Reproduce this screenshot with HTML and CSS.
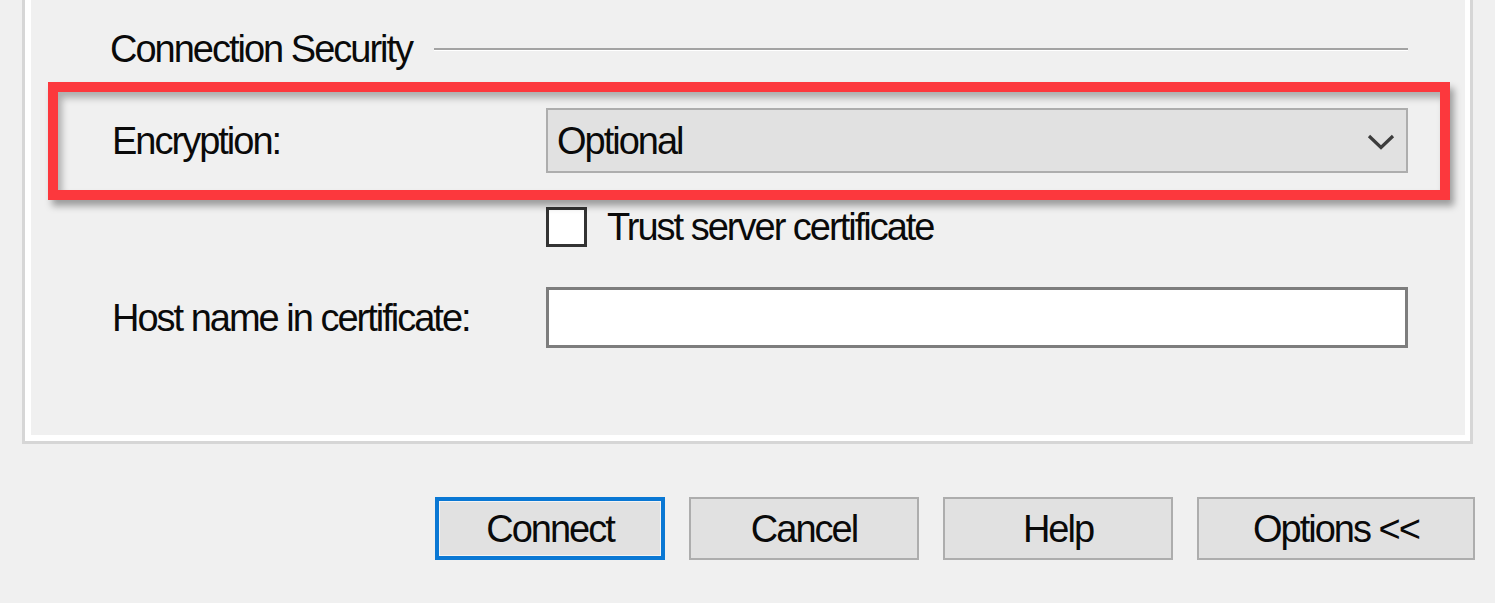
FILE: index.html
```html
<!DOCTYPE html>
<html>
<head>
<meta charset="utf-8">
<title>Connection Security</title>
<link rel="stylesheet" href="styles.css">
</head>
<body>
<div class="dialog">
  <div class="group">
    <div class="group-inner">
      <div class="section-head">
        <span class="section-title">Connection Security</span>
        <span class="section-rule"></span>
      </div>
      <div class="row row-enc">
        <span class="field-label">Encryption:</span>
        <div class="select">
          <span class="select-value">Optional</span>
          <svg class="chevron" width="28" height="18" viewBox="0 0 28 18"><path d="M2 3 L14 14.5 L26 3" fill="none" stroke="#3c3c3c" stroke-width="3.2"/></svg>
        </div>
      </div>
      <div class="row row-check">
        <span class="label-spacer"></span>
        <div class="check">
          <span class="checkbox"></span>
          <span class="check-label">Trust server certificate</span>
        </div>
      </div>
      <div class="row row-host">
        <span class="field-label">Host name in certificate:</span>
        <div class="textbox"></div>
      </div>
    </div>
  </div>
  <div class="buttons">
    <button class="btn btn-default">Connect</button>
    <button class="btn">Cancel</button>
    <button class="btn">Help</button>
    <button class="btn btn-wide">Options &lt;&lt;</button>
  </div>
  <div class="highlight"></div>
</div>
</body>
</html>
```
FILE: styles.css
```css
html, body {
  margin: 0;
  padding: 0;
}
body {
  background: #f0f0f0;
  width: 1495px;
  height: 603px;
  overflow: hidden;
  font-family: "Liberation Sans", Arial, sans-serif;
  font-size: 38px;
  letter-spacing: -2px;
  color: #0a0a0a;
}
.dialog {
  position: relative;
  width: 1495px;
  height: 603px;
}
.group {
  margin-left: 22px;
  width: 1445px;
  border: solid #d6d6d6;
  border-width: 0 3px 3px 3px;
}
.group-inner {
  border: solid #ffffff;
  border-width: 0 5px 6px 6px;
  padding: 27px 57px 87px 81px;
}
.section-head {
  display: flex;
  align-items: center;
  height: 44px;
  margin-left: -2px;
}
.section-title {
  line-height: 44px;
  white-space: nowrap;
}
.section-rule {
  flex: 1;
  height: 0;
  margin-left: 22px;
  border-top: 2px solid #a3a3a3;
  border-bottom: 1px solid #ffffff;
}
.row {
  display: grid;
  grid-template-columns: 434px 862px;
  align-items: center;
}
.row-enc { margin-top: 37px; }
.row-check { margin-top: 32px; }
.row-host { margin-top: 38px; }
.field-label {
  line-height: 44px;
  white-space: nowrap;
}
.select {
  box-sizing: border-box;
  height: 65px;
  display: flex;
  align-items: center;
  justify-content: space-between;
  background: #e1e1e1;
  border: 2px solid #adadad;
  padding: 0 11px 0 9px;
}
.select-value {
  line-height: 44px;
}
.chevron {
  display: block;
  margin-top: 2px;
}
.check {
  display: flex;
  align-items: center;
  gap: 20px;
}
.checkbox {
  box-sizing: border-box;
  width: 41px;
  height: 40px;
  border: 3px solid #333333;
  background: #ffffff;
}
.check-label {
  line-height: 44px;
  white-space: nowrap;
}
.textbox {
  box-sizing: border-box;
  height: 61px;
  background: #ffffff;
  border: 3px solid #7d7d7d;
}
.buttons {
  display: flex;
  justify-content: flex-end;
  gap: 24px;
  margin-top: 53px;
  padding-right: 20px;
}
.btn {
  box-sizing: border-box;
  width: 230px;
  height: 63px;
  padding: 0;
  margin: 0;
  background: #e1e1e1;
  border: 2px solid #adadad;
  font-family: inherit;
  font-size: inherit;
  letter-spacing: inherit;
  color: #0a0a0a;
  line-height: 44px;
}
.btn-wide {
  width: 278px;
}
.btn-default {
  border: 4px solid #0a78d4;
  box-shadow: inset 0 0 0 1px #f4f4f4;
}
.highlight {
  position: absolute;
  left: 48px;
  top: 82px;
  width: 1402px;
  height: 118px;
  box-sizing: border-box;
  border: 10px solid #fc383d;
  box-shadow: 4px 6px 7px rgba(0, 0, 0, 0.35), inset 4px 6px 7px rgba(0, 0, 0, 0.28);
  pointer-events: none;
}
```
